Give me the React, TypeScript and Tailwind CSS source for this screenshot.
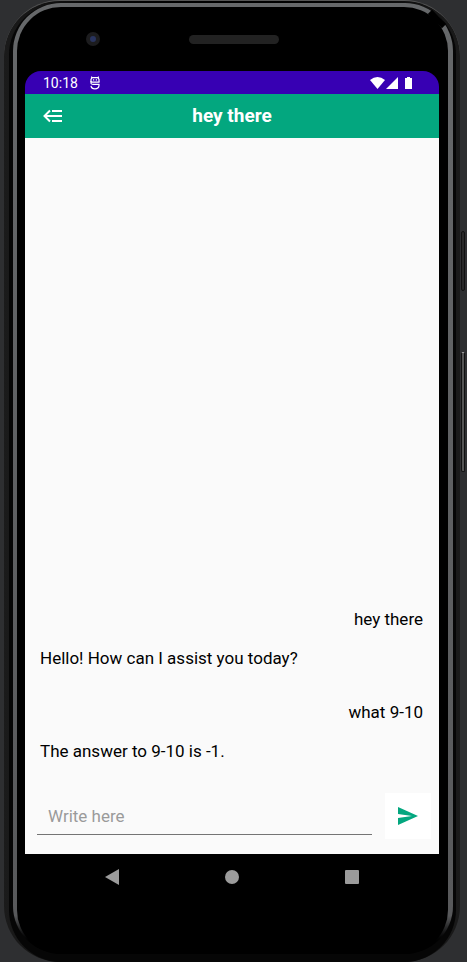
import React from "react";

const messages = [
  { id: 1, mine: true, text: "hey there" },
  { id: 2, mine: false, text: "Hello! How can I assist you today?" },
  { id: 3, mine: true, text: "what 9-10" },
  { id: 4, mine: false, text: "The answer to 9-10 is -1." },
];

function StatusBar() {
  return (
    <div className="flex h-[23px] items-center bg-[#3700b3] pr-[26px] pl-[18px] text-white">
      <span className="text-[14px] leading-6">10:18</span>
      <svg className="ml-[11px] h-[14px] w-[12px]" viewBox="0 0 12 14" fill="none" stroke="currentColor" strokeWidth="1.2">
        <path d="M2 6V3.4L3 1.6H9L10 3.4V6" />
        <path d="M2.2 .6L3.4 2M9.8 .6L8.6 2M4 3.9h1.2M6.8 3.9H8M1.4 6.2H10.6M2 5V7.4Q2.4 8.4 4 8.4H10V9.6Q9.6 12.8 6 12.8T2 9.8" />
      </svg>
      <svg className="ml-auto h-[14px] w-[43px]" viewBox="0 0 43 14" fill="currentColor">
        <path d="M0 4Q7.5-2 15 4L7.5 13Z" />
        <path d="M28 1V13H16Z" />
        <path d="M37 1h3v1h2v11h-7V2h2Z" />
      </svg>
    </div>
  );
}

function TopBar() {
  return (
    <header className="grid h-11 grid-cols-[56px_1fr_56px] items-center bg-[#03a77f] text-white">
      <button type="button" aria-label="Back" className="flex h-11 items-center pl-[18px]">
        <svg className="h-[14px] w-[20px]" viewBox="0 0 20 14" fill="none" stroke="currentColor" strokeWidth="2">
          <path d="M7 1.5L1.5 7L7 12.5M1.5 7H19M9 2H19M9 12H19" />
        </svg>
      </button>
      <h1 className="text-center text-[19px] leading-6 font-bold">hey there</h1>
    </header>
  );
}

function Composer() {
  return (
    <form className="flex items-center gap-[13px] pt-[21px] pr-2 pb-[15px] pl-3" onSubmit={(e) => e.preventDefault()}>
      <input
        type="text"
        aria-label="Message"
        placeholder="Write here"
        className="h-[38px] min-w-0 flex-1 border-b border-[#747474] bg-transparent px-[11px] text-[17px] text-black outline-none placeholder:text-[#9a9a9a]"
      />
      <button type="submit" aria-label="Send" className="flex size-[46px] items-center justify-center bg-white">
        <svg className="h-[18px] w-[20px]" viewBox="0 0 20 18" fill="#03a77f">
          <path d="M0 0L20 9L0 18V11L14 9L0 7Z" />
        </svg>
      </button>
    </form>
  );
}

function NavBar() {
  return (
    <nav className="flex h-[46px] items-center justify-between px-20 text-[#9b9b9b]">
      <button type="button" aria-label="Back">
        <svg className="h-4 w-[14px]" viewBox="0 0 14 16" fill="currentColor">
          <path d="M14 0V16L0 8Z" />
        </svg>
      </button>
      <button type="button" aria-label="Home" className="size-[14px] rounded-full bg-current" />
      <button type="button" aria-label="Overview" className="size-[14px] rounded-[1px] bg-current" />
    </nav>
  );
}

export default function App() {
  return (
    <main className="relative min-h-screen overflow-hidden bg-[#2e2f31] pr-[7px] pl-[4px] font-[Roboto,sans-serif]">
      <div className="absolute top-[231px] right-[2px] h-[60px] w-[4px] rounded-sm border border-[#111] bg-[#292929]" />
      <div className="absolute top-[352px] right-[2px] h-[120px] w-[4px] rounded-sm border border-[#111] border-t-[#aaa] bg-[#555]" />
      <div className="flex min-h-screen flex-col rounded-[56px] border-t border-[#555] bg-linear-to-r from-[#1b1b1b] via-black to-[#1b1b1b] pt-[2px] pr-[4px] pl-[5px]">
        <div className="flex flex-1 flex-col rounded-[52px] bg-[#060606] pr-[3px] pb-2 pl-[4px]">
          <div className="relative flex flex-1 flex-col rounded-[48px] bg-linear-to-b from-[#66686a] from-0% via-[#58595b] via-96% to-black to-99% pt-[4px] pr-[5px] pl-[4px]">
            {/* break in the bezel highlight */}
            <div className="absolute top-[13px] right-[6px] h-[6px] w-[20px] rotate-45 bg-black" />
            <div className="flex flex-1 flex-col rounded-[44px] bg-black pr-[9px] pb-[54px] pl-2">
              <div className="flex h-16 items-center">
                <div className="ml-[61px] flex size-[14px] items-center justify-center rounded-full bg-[#1c1c1e]">
                  <div className="size-[6px] rounded-full bg-[#29345f]" />
                </div>
                <div className="ml-[89px] h-[9px] w-[90px] rounded-full bg-[#222]" />
              </div>
              <div className="flex flex-1 flex-col overflow-hidden rounded-[16px] bg-black">
                <StatusBar />
                <TopBar />
                <section className="flex flex-1 flex-col bg-[#fafafa]">
                  <ul className="flex flex-1 flex-col justify-end pr-4 pl-[15px] text-[17px] leading-6 text-black">
                    {messages.map((m) => (
                      <li key={m.id} className={m.mine ? "mb-[15px] text-right" : "mb-[30px] text-left last:mb-[9px]"}>
                        {m.text}
                      </li>
                    ))}
                  </ul>
                  <Composer />
                </section>
                <NavBar />
              </div>
            </div>
          </div>
        </div>
      </div>
    </main>
  );
}
